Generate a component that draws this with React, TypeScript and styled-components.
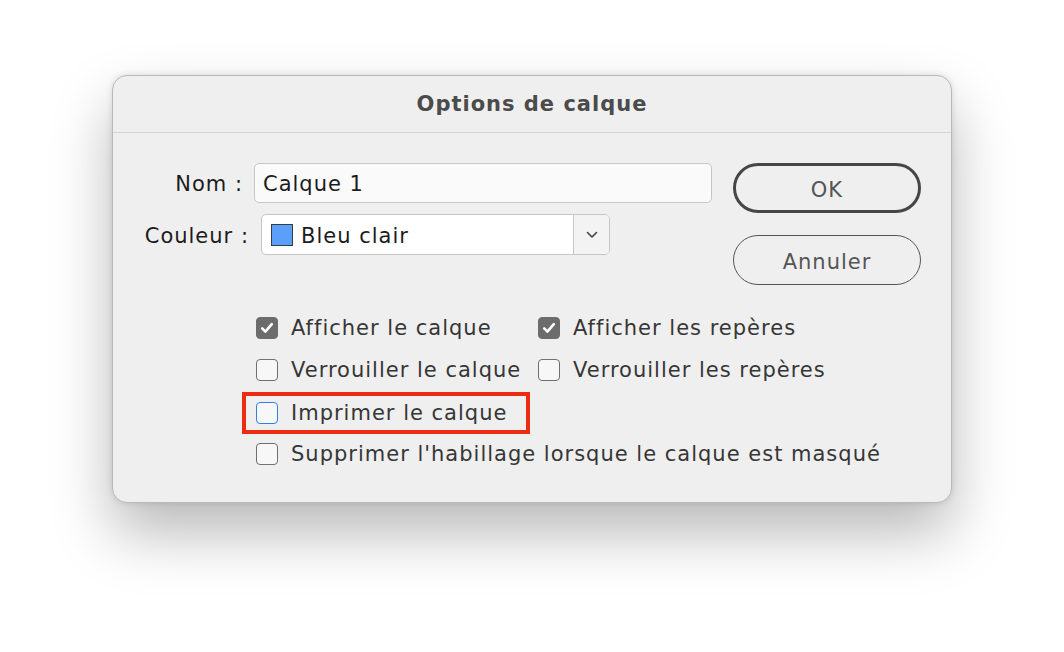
import styled, { createGlobalStyle } from "styled-components";

const GlobalStyle = createGlobalStyle`
  html, body {
    margin: 0;
    padding: 0;
    background: #ffffff;
  }
  body {
    font-family: "DejaVu Sans", "Liberation Sans", sans-serif;
    letter-spacing: 1px;
  }
`;

type Option = { label: string; checked?: boolean; focused?: boolean; wide?: boolean };

const options: Option[] = [
  { label: "Afficher le calque", checked: true },
  { label: "Afficher les repères", checked: true },
  { label: "Verrouiller le calque" },
  { label: "Verrouiller les repères" },
  { label: "Imprimer le calque", focused: true, wide: true },
  { label: "Supprimer l'habillage lorsque le calque est masqué", wide: true },
];

function CheckIcon() {
  return (
    <svg width="16" height="16" viewBox="0 0 16 16">
      <path d="M3.2 8.4 L6.4 11.6 L12.8 4.2" fill="none" stroke="#fff" strokeWidth="2.6" strokeLinecap="round" strokeLinejoin="round" />
    </svg>
  );
}

function Chevron() {
  return (
    <svg width="12" height="8" viewBox="0 0 12 8">
      <path d="M1.5 1.5 L6 6 L10.5 1.5" fill="none" stroke="#444" strokeWidth="1.6" strokeLinecap="round" strokeLinejoin="round" />
    </svg>
  );
}

function CheckItem({ label, checked, focused }: Option) {
  const content = (
    <>
      <Box $checked={!!checked} $focused={!!focused}>
        {checked && <CheckIcon />}
      </Box>
      <ItemLabel>{label}</ItemLabel>
    </>
  );
  if (focused) return <Highlight>{content}</Highlight>;
  return <Item>{content}</Item>;
}

export default function App() {
  return (
    <>
      <GlobalStyle />
      <Page>
        <Dialog>
          <TitleBar>Options de calque</TitleBar>
          <Body>
            <TopSection>
              <Fields>
                <FieldRow>
                  <FieldLabel $width={130}>Nom :</FieldLabel>
                  <TextInput>Calque 1</TextInput>
                </FieldRow>
                <FieldRow>
                  <FieldLabel $width={136}>Couleur :</FieldLabel>
                  <Select>
                    <SelectValue>
                      <Swatch />
                      Bleu clair
                    </SelectValue>
                    <SelectArrow>
                      <Chevron />
                    </SelectArrow>
                  </Select>
                </FieldRow>
              </Fields>
              <Buttons>
                <Button $primary>OK</Button>
                <Button>Annuler</Button>
              </Buttons>
            </TopSection>
            <OptionsGrid>
              {options.map((opt) => (
                <Cell key={opt.label} $wide={!!opt.wide}>
                  <CheckItem {...opt} />
                </Cell>
              ))}
            </OptionsGrid>
          </Body>
        </Dialog>
      </Page>
    </>
  );
}

const Page = styled.div`
  width: 1064px;
  height: 652px;
  padding: 75px 0 0 112px;
  box-sizing: border-box;
`;

const Dialog = styled.div`
  width: 840px;
  height: 428px;
  box-sizing: border-box;
  background: #efefef;
  border: 1px solid #b9b9b9;
  border-radius: 15px;
  box-shadow: 0 30px 60px rgba(0, 0, 0, 0.28), 0 0 6px rgba(0, 0, 0, 0.12);
  overflow: hidden;
`;

const TitleBar = styled.div`
  height: 56px;
  display: flex;
  align-items: center;
  justify-content: center;
  border-bottom: 1px solid #d3d3d3;
  font-size: 21px;
  font-weight: bold;
  color: #4b4b4b;
`;

const Body = styled.div`
  padding: 30px 30px 0 0;
`;

const TopSection = styled.div`
  display: flex;
  justify-content: space-between;
`;

const Fields = styled.div`
  display: flex;
  flex-direction: column;
  gap: 11px;
`;

const FieldRow = styled.div`
  display: flex;
  align-items: center;
  gap: 11px;
`;

const FieldLabel = styled.div<{ $width: number }>`
  width: ${(p) => p.$width}px;
  padding-top: 2px;
  text-align: right;
  font-size: 21px;
  color: #1c1c1c;
`;

const TextInput = styled.div`
  width: 458px;
  height: 40px;
  box-sizing: border-box;
  border: 1.5px solid #c6c6c6;
  border-radius: 5px;
  background: #fafafa;
  display: flex;
  align-items: center;
  padding: 2px 0 0 8px;
  font-size: 21px;
  color: #1c1c1c;
`;

const Select = styled.div`
  width: 349px;
  height: 41px;
  margin-left: 1px;
  box-sizing: border-box;
  border: 1.5px solid #c6c6c6;
  border-radius: 5px;
  background: #ffffff;
  display: flex;
  overflow: hidden;
`;

const SelectValue = styled.div`
  flex: 1;
  display: flex;
  align-items: center;
  gap: 8px;
  padding: 2px 0 0 9px;
  font-size: 21px;
  color: #1c1c1c;
  border-right: 1.5px solid #c6c6c6;
`;

const Swatch = styled.span`
  width: 22px;
  height: 22px;
  margin-top: -2px;
  box-sizing: border-box;
  background: #5aa0fa;
  border: 1.5px solid #3a3a3a;
`;

const SelectArrow = styled.div`
  width: 35px;
  display: flex;
  align-items: center;
  justify-content: center;
  background: #f3f3f3;
`;

const Buttons = styled.div`
  display: flex;
  flex-direction: column;
  gap: 22px;
`;

const Button = styled.div<{ $primary?: boolean }>`
  width: 188px;
  height: 50px;
  box-sizing: border-box;
  border-radius: 25px;
  border: ${(p) => (p.$primary ? "3px solid #464646" : "1.5px solid #555555")};
  background: #efefef;
  display: flex;
  align-items: center;
  justify-content: center;
  padding-top: 3px;
  font-size: 21px;
  color: #555555;
`;

const OptionsGrid = styled.div`
  display: grid;
  grid-template-columns: 282px auto;
  grid-auto-rows: 42px;
  margin: 22px 0 0 143px;
`;

const Cell = styled.div<{ $wide: boolean }>`
  grid-column: ${(p) => (p.$wide ? "1 / -1" : "auto")};
  display: flex;
  align-items: center;
`;

const Item = styled.div`
  display: flex;
  align-items: center;
  gap: 13px;
`;

const Highlight = styled(Item)`
  height: 42px;
  width: 288px;
  box-sizing: border-box;
  margin: 1px 0 0 -14px;
  padding-left: 10px;
  border: 4px solid #ee2b12;
`;

const Box = styled.span<{ $checked: boolean; $focused: boolean }>`
  width: 22px;
  height: 22px;
  box-sizing: border-box;
  flex-shrink: 0;
  border-radius: 4px;
  display: flex;
  align-items: center;
  justify-content: center;
  background: ${(p) => (p.$checked ? "#6c6c6c" : "#f7f7f7")};
  border: 1.5px solid
    ${(p) => (p.$checked ? "#6c6c6c" : p.$focused ? "#2f7fe6" : "#6f6f6f")};
`;

const ItemLabel = styled.span`
  font-size: 21px;
  color: #363636;
  white-space: nowrap;
`;
